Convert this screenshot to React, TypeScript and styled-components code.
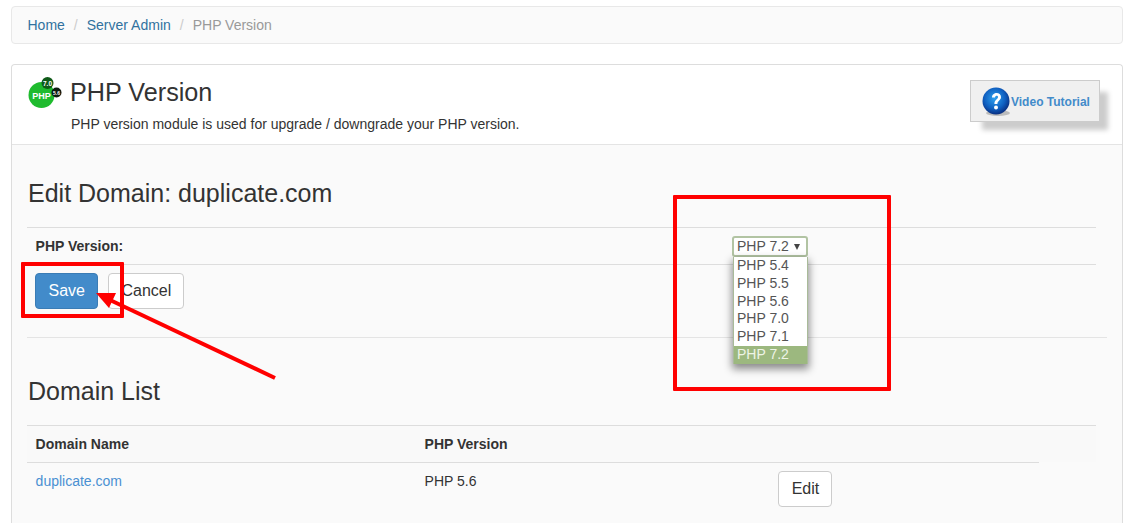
import React from "react";
import styled, { createGlobalStyle } from "styled-components";

const Global = createGlobalStyle`
  html, body { margin: 0; padding: 0; background: #fff; }
  body { font-family: "Liberation Sans", Arial, sans-serif; font-size: 14px; color: #333; line-height: 20px; }
`;
const Page = styled.div`
  position: relative; width: 1136px; height: 523px; overflow: hidden;
  padding: 6px 13px 0 11px; box-sizing: border-box;
`;
const Breadcrumb = styled.nav`
  display: flex; align-items: center; height: 38px; box-sizing: border-box;
  padding: 0 15.5px; background: #fafafa; border: 1px solid #e8e8e8; border-radius: 4px;
  margin-bottom: 20px;
`;
const Crumb = styled.a<{ $active?: boolean }>`color: ${(p) => (p.$active ? "#999" : "#31729f")};`;
const Sep = styled.span`color: #ccc; padding: 0 9px;`;
const Panel = styled.section`
  border: 1px solid #ddd; border-bottom: 0; border-radius: 4px 4px 0 0; background: #fafafa; height: 460px;
`;
const PanelHead = styled.header`
  display: flex; height: 80px; box-sizing: border-box; background: #fff; border-bottom: 1px solid #e4e4e4;
  padding: 12px 22px 0 16px; border-radius: 4px 4px 0 0;
`;
const Logo = styled.svg`width: 35px; height: 32px; margin-right: 8px; flex: none;`;
const HeadText = styled.div`flex: 1;`;
const Title = styled.h1`font-size: 25.2px; line-height: 30px; font-weight: 400; margin: 0 0 7px -1px; color: #333;`;
const Desc = styled.p`margin: 0; line-height: 20px; color: #333;`;
const Video = styled.a`
  display: flex; align-items: center; box-sizing: border-box; width: 130px; height: 42px; margin-top: 3px;
  padding: 2px 0 0 11px; background: #f0f0f0; border: 1px solid #ccc; box-shadow: 10px 10px 5px -2px #ccc;
  color: #428bca; font-size: 12px; font-weight: 700;
`;
const VideoIcon = styled.svg`width: 29px; height: 30px; flex: none;`;
const Body = styled.div`padding: 0 15px;`;
const SectionTitle = styled.h2`font-size: 25px; line-height: 26px; font-weight: 400; color: #333; margin: 0; padding-left: 1px;`;
const EditTitle = styled(SectionTitle)`padding-top: 35px; margin-bottom: 21px;`;
const ListTitle = styled(SectionTitle)`padding-top: 40px; margin-bottom: 21px;`;
const FormRow = styled.div`
  display: flex; align-items: center; width: 1069px; height: 38px; box-sizing: border-box;
  border-top: 1px solid #ddd; border-bottom: 1px solid #ddd; padding-left: 8.6px; font-weight: 700;
`;
const Buttons = styled.div`display: flex; gap: 10px; padding: 8px 0 28px 8px; border-bottom: 1px solid #e4e4e4; width: 1072px;`;
const Btn = styled.button<{ $primary?: boolean }>`
  font: 16px/22px "Liberation Sans", Arial, sans-serif; padding: 6px ${(p) => (p.$primary ? "12.5px" : "12px")}; height: 36px; box-sizing: border-box;
  border-radius: 4px; border: 1px solid ${(p) => (p.$primary ? "#3a7cb5" : "#ccc")};
  background: ${(p) => (p.$primary ? "#428bca" : "#fff")}; color: ${(p) => (p.$primary ? "#fff" : "#333")};
`;
const TableHead = styled.div`
  display: grid; grid-template-columns: 389px 1fr; width: 1069px; height: 37px; box-sizing: border-box;
  border-top: 1px solid #ddd; align-items: center; font-weight: 700; padding-left: 8.6px;
  background: #f9f9f9;
`;
const HeadRule = styled.div`height: 1px; width: 1012px; background: #ddd;`;
const DataRow = styled.div`display: grid; grid-template-columns: 389px 353.4px 1fr; padding: 8px 0 0 8.6px;`;
const Cell = styled.div`line-height: 20px;`;
const Link = styled.a`color: #4a90d2;`;
const EditBtn = styled(Btn)`width: 54px; padding: 0 0 0 1px;`;

const FakeSelect = styled.div`
  position: absolute; left: 732px; top: 236px; width: 76px; height: 21px; box-sizing: border-box;
  border: 2px solid #b2c4a3; border-radius: 3px; background: #fff; color: #555; padding-left: 3px;
  line-height: 17px; font-size: 14px; display: flex; align-items: center; gap: 5px;
`;
const Caret = styled.span`
  width: 0; height: 0; border-left: 3.5px solid transparent; border-right: 3.5px solid transparent; border-top: 6px solid #444;
`;
const Menu = styled.ul`
  position: absolute; left: 733px; top: 257px; width: 73px; margin: 0; padding: 0; list-style: none; background: #fff;
  border: 1px solid #a9bb99; border-top: 0; border-bottom: 0; box-sizing: content-box;
  box-shadow: 0 4px 8px 1px rgba(0,0,0,.45);
`;
const MenuItem = styled.li<{ $sel?: boolean }>`
  height: 17.8px; line-height: 17.8px; padding-left: 3px; font-size: 14px;
  color: ${(p) => (p.$sel ? "#eef4e6" : "#555")}; background: ${(p) => (p.$sel ? "#9cb87f" : "transparent")};
`;
const RedBox = styled.div<{ $x: number; $y: number; $w: number; $h: number }>`
  position: absolute; left: ${(p) => p.$x}px; top: ${(p) => p.$y}px; width: ${(p) => p.$w}px; height: ${(p) => p.$h}px;
  box-sizing: border-box; border: 4px solid #f00; border-radius: 1px; pointer-events: none;
`;
const Arrow = styled.svg`position: absolute; left: 90px; top: 285px; width: 195px; height: 100px;`;

const versions = ["PHP 5.4", "PHP 5.5", "PHP 5.6", "PHP 7.0", "PHP 7.1", "PHP 7.2"];

export default function App() {
  return (
    <Page>
      <Global />
      <Breadcrumb>
        <Crumb>Home</Crumb><Sep>/</Sep><Crumb>Server Admin</Crumb><Sep>/</Sep><Crumb $active>PHP Version</Crumb>
      </Breadcrumb>
      <Panel>
        <PanelHead>
          <Logo viewBox="0 0 35 32">
            <circle cx="13.5" cy="18" r="13" fill="#1fbb2e" />
            <circle cx="19.5" cy="6" r="6" fill="#0f5a18" />
            <circle cx="28.5" cy="15.5" r="5" fill="#0c1a0e" />
            <text x="13.5" y="22" textAnchor="middle" fontSize="9" fontWeight="700" fill="#fff" fontFamily="Liberation Sans">PHP</text>
            <text x="19.5" y="8.5" textAnchor="middle" fontSize="6.5" fontWeight="700" fill="#fff" fontFamily="Liberation Sans">7.0</text>
            <text x="28.5" y="17.5" textAnchor="middle" fontSize="5" fontWeight="700" fill="#fff" fontFamily="Liberation Sans">5.6</text>
          </Logo>
          <HeadText>
            <Title>PHP Version</Title>
            <Desc>PHP version module is used for upgrade / downgrade your PHP version.</Desc>
          </HeadText>
          <Video>
            <VideoIcon viewBox="0 0 29 30">
              <defs>
                <radialGradient id="orb" cx="45%" cy="40%" r="60%">
                  <stop offset="0%" stopColor="#2fa3f0" />
                  <stop offset="65%" stopColor="#0f5fc0" />
                  <stop offset="100%" stopColor="#0a2f80" />
                </radialGradient>
              </defs>
              <ellipse cx="16" cy="26" rx="12" ry="3" fill="#999" opacity=".6" />
              <circle cx="14" cy="14" r="13.5" fill="url(#orb)" />
              <path d="M10 10.5c0-6 9-6 9-.5c0 3.5-3.6 3.5-3.6 7h-3c0-4.5 3.6-4.8 3.6-7c0-1.8-2.8-1.8-3 .5z" fill="#fff" />
              <circle cx="14" cy="20.5" r="2" fill="#fff" />
            </VideoIcon>
            Video Tutorial
          </Video>
        </PanelHead>
        <Body>
          <EditTitle>Edit Domain: duplicate.com</EditTitle>
          <FormRow>PHP Version:</FormRow>
          <Buttons>
            <Btn $primary>Save</Btn>
            <Btn>Cancel</Btn>
          </Buttons>
          <ListTitle>Domain List</ListTitle>
          <TableHead>
            <span>Domain Name</span><span>PHP Version</span>
          </TableHead>
          <HeadRule />
          <DataRow>
            <Cell><Link>duplicate.com</Link></Cell>
            <Cell>PHP 5.6</Cell>
            <div><EditBtn>Edit</EditBtn></div>
          </DataRow>
        </Body>
      </Panel>
      <FakeSelect>PHP 7.2<Caret /></FakeSelect>
      <Menu>
        {versions.map((v) => (
          <MenuItem key={v} $sel={v === "PHP 7.2"}>{v}</MenuItem>
        ))}
      </Menu>
      <RedBox $x={673} $y={195} $w={218} $h={196} />
      <RedBox $x={21} $y={262} $w={103} $h={56} />
      <Arrow viewBox="90 285 195 100">
        <line x1="275" y1="378" x2="110" y2="300" stroke="#f00" strokeWidth="4" />
        <polygon points="96,293 116,293 109,308" fill="#f00" />
      </Arrow>
    </Page>
  );
}
